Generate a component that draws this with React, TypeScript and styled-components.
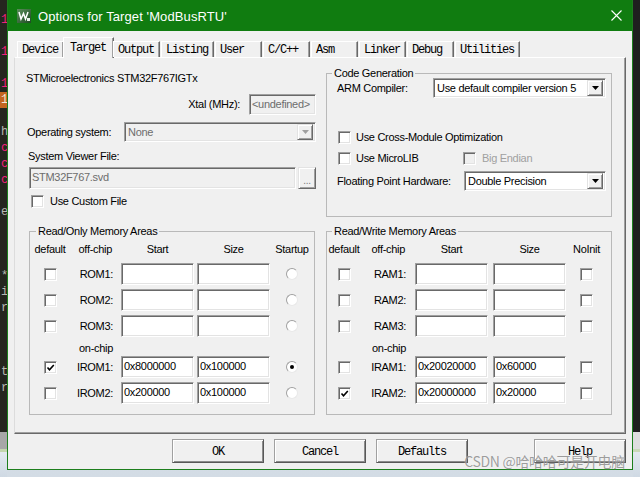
import React from 'react';
import styled, { createGlobalStyle, css } from 'styled-components';

const GlobalStyle = createGlobalStyle`
  html, body { margin: 0; padding: 0; }
  body {
    width: 640px; height: 477px; overflow: hidden;
    font-family: "Liberation Sans", Arial, sans-serif;
  }
  * { box-sizing: border-box; }
`;

const MONO = `"Liberation Mono", "Courier New", monospace`;

/* ---------- desktop / background ---------- */
const Screen = styled.div`
  position: relative;
  width: 640px;
  height: 477px;
  display: flex;
  align-items: flex-start;
  background: linear-gradient(180deg, #e3e9ef 0%, #d3dce5 100%);
  overflow: hidden;
`;

const SideStrip = styled.div`
  width: 7px;
  height: 477px;
  flex: none;
  display: flex;
  flex-direction: column;
`;

const StripTop = styled.div<{ $bg: string }>`
  height: 432px;
  flex: none;
  background: ${p => p.$bg};
  overflow: hidden;
`;

const StripBand = styled.div<{ $bg: string; $h: number }>`
  height: ${p => p.$h}px;
  flex: none;
  background: ${p => p.$bg};
`;

const StripRest = styled.div`
  flex: 1;
  background: linear-gradient(180deg, #e2e9f0, #cfd9e3);
`;

const EditorText = styled.div`
  padding-top: 12px;
  font-family: ${MONO};
  font-size: 12px;
`;

const CodeLine = styled.div<{ $kind?: 'm' | 'g' | 'o' }>`
  height: 16px;
  line-height: 16px;
  padding-left: 1px;
  white-space: pre;
  color: ${p => (p.$kind === 'm' ? '#f0207a' : p.$kind === 'o' ? '#f4e7d8' : '#b9b9b2')};
  background: ${p => (p.$kind === 'o' ? '#c4661f' : 'transparent')};
`;

/* ---------- dialog frame ---------- */
const Dialog = styled.div`
  width: 626px;
  height: 470px;
  flex: none;
  border: 1px solid #1d7f1d;
  border-top: none;
  background: #f0f0f0;
  display: flex;
  flex-direction: column;
`;

const TitleBar = styled.div`
  height: 31px;
  flex: none;
  background: #107c10;
  display: flex;
  align-items: center;
  padding: 0 9px;
  color: #fff;
  font-size: 13px;
  letter-spacing: 0.1px;
`;

const TitleText = styled.span`
  margin-left: 7px;
  margin-top: 1px;
`;

const CloseIcon = styled.svg`
  margin-left: auto;
  margin-right: 1px;
`;

const Body = styled.div`
  flex: 1;
  padding: 6px 6px 0;
  display: flex;
  flex-direction: column;
  font-size: 11px;
  letter-spacing: -0.3px;
  color: #000;
`;

/* ---------- tabs ---------- */
const TabRow = styled.div`
  height: 20px;
  display: flex;
  align-items: flex-end;
  padding-left: 3px;
  position: relative;
  z-index: 1;
`;

const Tab = styled.div<{ $active?: boolean }>`
  font-family: ${MONO};
  font-size: 12px;
  letter-spacing: -1.2px;
  color: #000;
  min-width: 47px;
  display: flex;
  align-items: center;
  padding: 0 5px 0 4px;
  background: #f0f0f0;
  border-style: solid;
  border-width: 1px 1px 0 1px;
  border-color: #fff #696969 transparent #fff;
  box-shadow: inset -1px 0 0 #a0a0a0;
  height: 16px;
  margin-right: 1px;
  ${p =>
    p.$active &&
    css`
      height: 21px;
      margin: 0 -1px -1px -2px;
      padding: 0 7px 1px 6px;
    `}
`;

const Panel = styled.div`
  height: 377px;
  flex: none;
  border: 1px solid;
  border-color: #fff #696969 #696969 #dcdcdc;
  box-shadow: inset -1px -1px 0 #a0a0a0;
  display: grid;
  grid-template-columns: 290px 286px;
  grid-template-rows: 159px 191px;
  column-gap: 10px;
  row-gap: 7px;
  padding-left: 11px;
`;

/* ---------- generic controls ---------- */
const sunken = css`
  border: 1px solid;
  border-color: #a0a0a0 #fff #fff #a0a0a0;
  box-shadow: inset 1px 1px 0 #696969, inset -1px -1px 0 #e3e3e3;
`;

const raised = css`
  border: 1px solid;
  border-color: #e3e3e3 #696969 #696969 #e3e3e3;
  box-shadow: inset 1px 1px 0 #fff, inset -1px -1px 0 #a0a0a0;
  background: #f0f0f0;
`;

const Field = styled.div<{ $w?: number; $h?: number; $disabled?: boolean }>`
  ${sunken};
  width: ${p => (p.$w ? `${p.$w}px` : 'auto')};
  flex: ${p => (p.$w ? 'none' : '1')};
  height: ${p => p.$h ?? 22}px;
  background: ${p => (p.$disabled ? '#f0f0f0' : '#fff')};
  color: ${p => (p.$disabled ? '#6d6d6d' : '#000')};
  padding: 0 2px;
  line-height: ${p => (p.$h ?? 22) - 3}px;
  white-space: nowrap;
  overflow: hidden;
`;

const SelectBox = styled.div<{ $w?: number; $disabled?: boolean }>`
  ${sunken};
  width: ${p => (p.$w ? `${p.$w}px` : 'auto')};
  flex: ${p => (p.$w ? 'none' : '1')};
  height: 20px;
  display: flex;
  align-items: center;
  padding: 2px 2px 2px 3px;
  background: ${p => (p.$disabled ? '#f0f0f0' : '#fff')};
  color: ${p => (p.$disabled ? '#6d6d6d' : '#000')};
  white-space: nowrap;
`;

const DropButton = styled.span`
  ${raised};
  margin-left: auto;
  width: 16px;
  height: 16px;
  flex: none;
  display: flex;
  align-items: center;
  justify-content: center;
`;

const BrowseButton = styled.div`
  ${raised};
  width: 18px;
  height: 22px;
  flex: none;
  color: #7a7a7a;
  font-size: 10px;
  text-align: center;
  line-height: 26px;
`;

const CheckBox = styled.span<{ $disabled?: boolean }>`
  ${sunken};
  width: 13px;
  height: 13px;
  flex: none;
  display: inline-flex;
  align-items: center;
  justify-content: center;
  background: ${p => (p.$disabled ? '#f0f0f0' : '#fff')};
`;

const Radio = styled.span`
  width: 12px;
  height: 12px;
  border-radius: 50%;
  border: 1px solid;
  border-color: #a0a0a0 #e8e8e8 #e8e8e8 #a0a0a0;
  background: #fff;
  display: inline-flex;
  align-items: center;
  justify-content: center;
`;

const RadioDot = styled.span`
  width: 4px;
  height: 4px;
  border-radius: 50%;
  background: #000;
`;

const Row = styled.div<{ $mt?: number; $ml?: number; $h?: number; $gap?: number; $w?: number; $end?: boolean }>`
  display: flex;
  align-items: center;
  justify-content: ${p => (p.$end ? 'flex-end' : 'flex-start')};
  margin-top: ${p => p.$mt ?? 0}px;
  margin-left: ${p => p.$ml ?? 0}px;
  height: ${p => (p.$h ? `${p.$h}px` : 'auto')};
  width: ${p => (p.$w ? `${p.$w}px` : 'auto')};
  gap: ${p => p.$gap ?? 0}px;
`;

const Label = styled.span<{ $w?: number; $muted?: boolean }>`
  width: ${p => (p.$w ? `${p.$w}px` : 'auto')};
  flex: none;
  line-height: 13px;
  color: ${p => (p.$muted ? '#a0a0a0' : '#000')};
  white-space: nowrap;
`;

/* ---------- panel sections ---------- */
const LeftTop = styled.div`
  display: flex;
  flex-direction: column;
  padding-top: 14px;
`;

const TextLine = styled.div<{ $mt?: number; $ml?: number }>`
  line-height: 13px;
  margin-top: ${p => p.$mt ?? 0}px;
  margin-left: ${p => p.$ml ?? 0}px;
  white-space: nowrap;
`;

const Group = styled.fieldset<{ $mt?: number; $ml?: number }>`
  margin: ${p => p.$mt ?? 0}px 0 0 ${p => p.$ml ?? 0}px;
  padding: 0;
  min-width: 0;
  border: 1px solid #b9b9b9;
  height: calc(100% - ${p => p.$mt ?? 0}px);
  width: 286px;
`;

const Legend = styled.legend<{ $offset: number }>`
  margin-left: ${p => p.$offset}px;
  padding: 0 2px;
  line-height: 14px;
  height: 14px;
`;

const CodeGenBody = styled.div`
  display: flex;
  flex-direction: column;
  padding: 0 5px 0 10px;
`;

const MemGrid = styled.div<{ $cols: string }>`
  display: grid;
  grid-template-columns: ${p => p.$cols};
  grid-template-rows: 16px 22px 22px 22px 11px 22px 22px;
  column-gap: 3px;
  row-gap: 4px;
  padding-top: 5px;
`;

const HeadCell = styled.div<{ $align?: string; $pr?: number }>`
  line-height: 13px;
  text-align: ${p => p.$align ?? 'center'};
  padding-right: ${p => p.$pr ?? 0}px;
  white-space: nowrap;
  align-self: start;
`;

const CenterCell = styled.div<{ $pr?: number }>`
  display: flex;
  align-items: center;
  justify-content: center;
  padding-right: ${p => p.$pr ?? 0}px;
`;

const RowLabel = styled.div<{ $pr: number }>`
  text-align: right;
  padding-right: ${p => p.$pr}px;
  align-self: center;
  line-height: 13px;
  white-space: nowrap;
`;

const OnChip = styled.div<{ $pr: number; $w: number }>`
  grid-column: 1 / -1;
  width: ${p => p.$w}px;
  text-align: right;
  padding-right: ${p => p.$pr}px;
  line-height: 13px;
  margin-top: 1px;
  white-space: nowrap;
`;

/* ---------- bottom buttons ---------- */
const ButtonRow = styled.div`
  display: flex;
  margin-top: 5px;
  padding-left: 158px;
  gap: 10px;
`;

const PushButton = styled.div<{ $push?: boolean }>`
  width: 92px;
  height: 24px;
  border: 1px solid;
  border-color: #a0a0a0 #585858 #585858 #a0a0a0;
  box-shadow: inset 1px 1px 0 #fff, inset -1px -1px 0 #8c8c8c;
  background: #f0f0f0;
  font-family: ${MONO};
  font-size: 12px;
  letter-spacing: -1.2px;
  display: flex;
  align-items: center;
  justify-content: center;
  padding-top: 1px;
  margin-left: ${p => (p.$push ? 'auto' : '0')};
`;

const Watermark = styled.div`
  position: absolute;
  right: 15px;
  top: 451px;
  font-family: "Noto Sans CJK SC", "Noto Sans", sans-serif;
  font-size: 14px;
  letter-spacing: -0.3px;
  color: rgba(120, 120, 120, 0.72);
  text-shadow: 0 0 1px rgba(255, 255, 255, 0.7);
  white-space: nowrap;
`;

/* ---------- small drawings ---------- */
const Arrow = ({ muted }: { muted?: boolean }) => (
  <svg width="7" height="4" viewBox="0 0 7 4">
    <path d="M0 0 H7 L3.5 4 Z" fill={muted ? '#a0a0a0' : '#000'} />
  </svg>
);

const Tick = () => (
  <svg width="9" height="9" viewBox="0 0 9 9">
    <polyline points="1.5,4.5 3.5,6.8 7.8,2" fill="none" stroke="#000" strokeWidth="1.6" />
  </svg>
);

const Check = ({ checked, disabled }: { checked?: boolean; disabled?: boolean }) => (
  <CheckBox $disabled={disabled}>{checked && <Tick />}</CheckBox>
);

const AppIcon = () => (
  <svg width="14" height="14" viewBox="0 0 14 14">
    <defs>
      <linearGradient id="ig" x1="0" y1="0" x2="1" y2="1">
        <stop offset="0" stopColor="#5a8f5a" />
        <stop offset="1" stopColor="#1f4a25" />
      </linearGradient>
    </defs>
    <rect x="0" y="0" width="14" height="14" fill="url(#ig)" />
    <polyline points="2,3 4,10 6.5,4.5 8.5,10 11,3" fill="none" stroke="#fff" strokeWidth="1.5" />
    <rect x="10" y="9" width="3" height="3" fill="#e8f2e8" />
  </svg>
);

/* ---------- data ---------- */
const editorLines: { ch: string; k?: 'm' | 'g' | 'o' }[] = [
  { ch: '1', k: 'm' }, { ch: '' }, { ch: '1', k: 'm' }, { ch: '' }, { ch: '1', k: 'm' },
  { ch: '1', k: 'o' }, { ch: '' }, { ch: 'h', k: 'g' }, { ch: 'c', k: 'm' }, { ch: 'c', k: 'm' },
  { ch: 'c', k: 'm' }, { ch: '' }, { ch: 'e', k: 'g' }, { ch: '' }, { ch: '' }, { ch: '' },
  { ch: '*', k: 'g' }, { ch: 'i', k: 'g' }, { ch: 'r', k: 'g' }, { ch: '' }, { ch: '' }, { ch: '' },
  { ch: 't', k: 'g' }, { ch: 'r', k: 'g' },
];

const tabs = ['Device', 'Target', 'Output', 'Listing', 'User', 'C/C++', 'Asm', 'Linker', 'Debug', 'Utilities'];

type MemRow = { label: string; start: string; size: string; def: boolean; last: boolean } | 'onchip';

const roRows: MemRow[] = [
  { label: 'ROM1:', start: '', size: '', def: false, last: false },
  { label: 'ROM2:', start: '', size: '', def: false, last: false },
  { label: 'ROM3:', start: '', size: '', def: false, last: false },
  'onchip',
  { label: 'IROM1:', start: '0x8000000', size: '0x100000', def: true, last: true },
  { label: 'IROM2:', start: '0x200000', size: '0x100000', def: false, last: false },
];

const rwRows: MemRow[] = [
  { label: 'RAM1:', start: '', size: '', def: false, last: false },
  { label: 'RAM2:', start: '', size: '', def: false, last: false },
  { label: 'RAM3:', start: '', size: '', def: false, last: false },
  'onchip',
  { label: 'IRAM1:', start: '0x20020000', size: '0x60000', def: false, last: false },
  { label: 'IRAM2:', start: '0x20000000', size: '0x20000', def: true, last: false },
];

type MemProps = {
  title: string;
  legendOffset: number;
  ml?: number;
  defW: number;
  labelW: number;
  startW: number;
  labelPr: number;
  lastHeader: string;
  lastPr: number;
  lastKind: 'radio' | 'check';
  rows: MemRow[];
};

const MemoryGroup = ({
  title, legendOffset, ml, defW, labelW, startW, labelPr, lastHeader, lastPr, lastKind, rows,
}: MemProps) => (
  <Group $ml={ml}>
    <Legend $offset={legendOffset}>{title}</Legend>
    <MemGrid $cols={`${defW}px ${labelW}px ${startW}px 73px minmax(0, 1fr)`}>
      <HeadCell>default</HeadCell>
      <HeadCell $align="right" $pr={labelPr + 1}>off-chip</HeadCell>
      <HeadCell style={{ width: 73 }}>Start</HeadCell>
      <HeadCell>Size</HeadCell>
      <HeadCell $pr={lastPr}>{lastHeader}</HeadCell>
      {rows.map((r, i) =>
        r === 'onchip' ? (
          <OnChip key={i} $pr={labelPr} $w={defW + 3 + labelW}>on-chip</OnChip>
        ) : (
          <React.Fragment key={i}>
            <CenterCell><Check checked={r.def} /></CenterCell>
            <RowLabel $pr={labelPr}>{r.label}</RowLabel>
            <Field $w={73}>{r.start}</Field>
            <Field $w={73}>{r.size}</Field>
            <CenterCell $pr={lastPr}>
              {lastKind === 'radio' ? <Radio>{r.last && <RadioDot />}</Radio> : <Check checked={r.last} />}
            </CenterCell>
          </React.Fragment>
        )
      )}
    </MemGrid>
  </Group>
);

export default function App() {
  return (
    <>
      <GlobalStyle />
      <Screen>
        <SideStrip>
          <StripTop $bg="#25261f">
            <EditorText>
              {editorLines.map((l, i) => (
                <CodeLine key={i} $kind={l.k}>{l.ch}</CodeLine>
              ))}
            </EditorText>
          </StripTop>
          <StripBand $bg="#a7a7a7" $h={17} />
          <StripBand $bg="#c3d6ae" $h={3} />
          <StripRest />
        </SideStrip>

        <Dialog>
          <TitleBar>
            <AppIcon />
            <TitleText>Options for Target 'ModBusRTU'</TitleText>
            <CloseIcon width="11" height="11" viewBox="0 0 11 11">
              <path d="M0.5 0.5 L10.5 10.5 M10.5 0.5 L0.5 10.5" stroke="#fff" strokeWidth="1.1" />
            </CloseIcon>
          </TitleBar>

          <Body>
            <TabRow>
              {tabs.map(t => (
                <Tab key={t} $active={t === 'Target'}>{t}</Tab>
              ))}
            </TabRow>

            <Panel>
              <LeftTop>
                <TextLine>STMicroelectronics STM32F767IGTx</TextLine>
                <Row $mt={9} $h={21} $gap={9} $end>
                  <Label>Xtal (MHz):</Label>
                  <Field $w={67} $h={21} $disabled>&lt;undefined&gt;</Field>
                </Row>
                <Row $mt={7} $ml={1}>
                  <Label $w={97}>Operating system:</Label>
                  <SelectBox $disabled>
                    None
                    <DropButton><Arrow muted /></DropButton>
                  </SelectBox>
                </Row>
                <TextLine $mt={8} $ml={2}>System Viewer File:</TextLine>
                <Row $mt={4} $ml={3} $gap={2}>
                  <Field $disabled>STM32F767.svd</Field>
                  <BrowseButton>...</BrowseButton>
                </Row>
                <Row $mt={6} $ml={5} $gap={6}>
                  <Check />
                  <Label>Use Custom File</Label>
                </Row>
              </LeftTop>

              <Group $mt={8}>
                <Legend $offset={5}>Code Generation</Legend>
                <CodeGenBody>
                  <Row $mt={-2}>
                    <Label $w={96}>ARM Compiler:</Label>
                    <SelectBox>
                      Use default compiler version 5
                      <DropButton><Arrow /></DropButton>
                    </SelectBox>
                  </Row>
                  <Row $mt={33} $ml={1} $gap={5}>
                    <Check />
                    <Label>Use Cross-Module Optimization</Label>
                  </Row>
                  <Row $mt={8} $ml={1}>
                    <Row $gap={5} $w={125}>
                      <Check />
                      <Label>Use MicroLIB</Label>
                    </Row>
                    <Row $gap={6}>
                      <Check disabled />
                      <Label $muted>Big Endian</Label>
                    </Row>
                  </Row>
                  <Row $mt={6}>
                    <Label $w={127}>Floating Point Hardware:</Label>
                    <SelectBox>
                      Double Precision
                      <DropButton><Arrow /></DropButton>
                    </SelectBox>
                  </Row>
                </CodeGenBody>
              </Group>

              <MemoryGroup
                title="Read/Only Memory Areas"
                legendOffset={6}
                ml={3}
                defW={40}
                labelW={45}
                startW={73}
                labelPr={5}
                lastHeader="Startup"
                lastPr={3}
                lastKind="radio"
                rows={roRows}
              />
              <MemoryGroup
                title="Read/Write Memory Areas"
                legendOffset={5}
                defW={34}
                labelW={48}
                startW={75}
                labelPr={6}
                lastHeader="NoInit"
                lastPr={7}
                lastKind="check"
                rows={rwRows}
              />
            </Panel>

            <ButtonRow>
              <PushButton>OK</PushButton>
              <PushButton>Cancel</PushButton>
              <PushButton>Defaults</PushButton>
              <PushButton $push>Help</PushButton>
            </ButtonRow>
          </Body>
        </Dialog>

        <SideStrip>
          <StripTop $bg="#1f1f1f" />
          <StripBand $bg="#dedede" $h={17} />
          <StripBand $bg="#c9d9b9" $h={3} />
          <StripRest />
        </SideStrip>

        <Watermark>CSDN @哈哈哈可是开电脑</Watermark>
      </Screen>
    </>
  );
}
